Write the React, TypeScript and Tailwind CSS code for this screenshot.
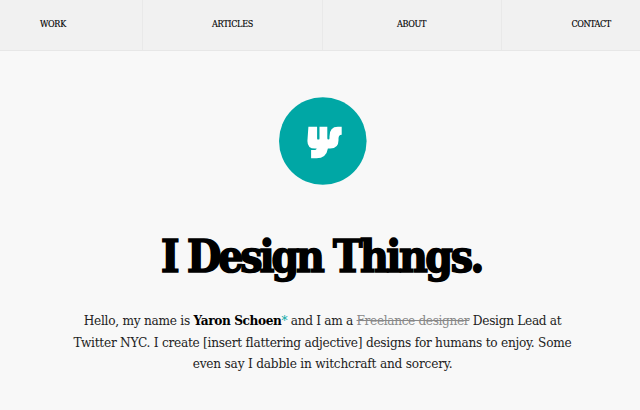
const links = [
  { label: 'WORK', cell: 'w-[143px] pl-[40px]', text: 'tracking-[-0.3px]' },
  { label: 'ARTICLES', cell: 'w-[180px] pl-[69px]', text: 'tracking-[-0.3px]' },
  { label: 'ABOUT', cell: 'w-[179px] pl-[74px]', text: 'tracking-[-0.35px]' },
  { label: 'CONTACT', cell: 'w-[138px] pl-[69.5px] border-r-0', text: 'tracking-[-0.45px]' },
];

function Logo() {
  return (
    <svg className="h-[88px] w-[88px]" viewBox="0 0 88 88" aria-hidden="true">
      <circle cx="43.8" cy="44" r="43.8" fill="#00a7a5" />
      <g transform="translate(-279 -96.8)" fill="#fff">
        <path d="M308.4 126.6h8.7v11.6q0 1.2 1.2 1.2t1.2-1.2v-11.6h7.8v11.4q0 1.2 1.1 1.2t1.1-1.2v-1.8q0-9.6 8.3-9.6h3.9v7.9q-3.2 0-3.2 3.9v1.6q0 8.3-8.2 8.3h-2.4q-1.6 9.8-11.4 9.8h-5.4v-8.2h3.6q1.6 0 2-1.6h-1.8q-7.5 0-7.5-7.6z" />
      </g>
    </svg>
  );
}

export default function App() {
  return (
    <div className="h-[410px] w-[640px] overflow-hidden bg-[#f8f8f8] font-['DejaVu_Serif_Condensed','DejaVu_Serif',serif] text-[#222]">
      <nav className="flex h-[51px] border-b border-[#e7e7e7] bg-[#f1f1f1] text-[9px] leading-[48px] text-black [-webkit-text-stroke:0.15px_black]">
        {links.map((l) => (
          <a key={l.label} className={`border-r border-[#e9e9e9] ${l.cell}`}>
            <span className={l.text}>{l.label}</span>
          </a>
        ))}
      </nav>
      <main className="flex flex-col items-center pt-[45.5px]">
        <div className="ml-[6px]"><Logo /></div>
        <h1 className="mt-[42px] ml-[3px] h-[60px] text-[44px] leading-[60px] font-bold whitespace-nowrap tracking-[-2.6px] text-black [-webkit-text-stroke:1.6px_black]">
          <span className="tracking-[-3.2px]">I </span><span className="tracking-[-3.1px]">Design</span> <span className="tracking-[-2.4px]">Things.</span>
        </h1>
        <div className="mt-[23.5px] ml-[5px] text-center text-[13.5px] leading-[21.5px] whitespace-nowrap">
          <p className="tracking-[-0.3px]"><span className="tracking-[-0.25px]">Hello, my name is </span><b className="tracking-[-0.4px] text-black">Yaron Schoen</b><span className="text-[#00a7a5]">*</span> and I am a <s className="tracking-[-0.35px] text-[#888]">Freelance designer</s> Design Lead at</p>
          <p className="tracking-[-0.25px]">Twitter NYC. I create [insert flattering adjective] designs for humans to enjoy. Some</p>
          <p className="tracking-[-0.2px]">even say I dabble in witchcraft and sorcery.</p>
        </div>
      </main>
    </div>
  );
}
